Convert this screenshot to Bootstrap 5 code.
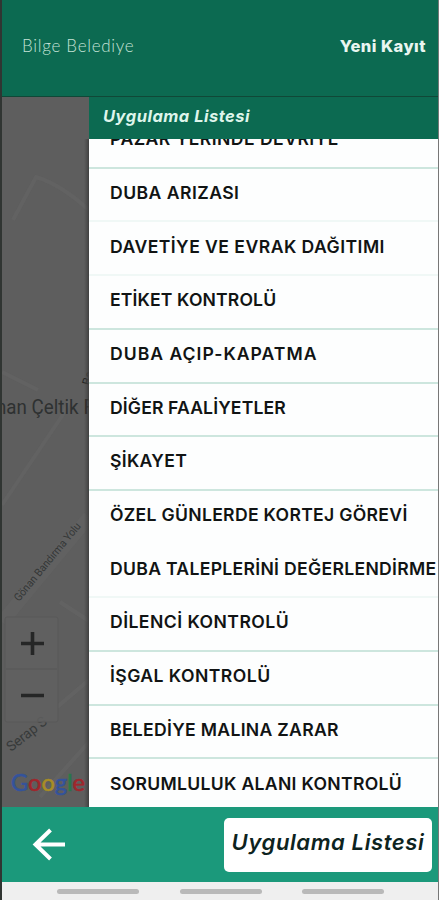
<!DOCTYPE html>
<html lang="tr">
<head>
<meta charset="utf-8">
<meta name="viewport" content="width=device-width, initial-scale=1">
<title>Bilge Belediye</title>
<link href="https://cdn.jsdelivr.net/npm/bootstrap@5.3.0/dist/css/bootstrap.min.css" rel="stylesheet">
<style>
body{font-family:Inter,"Open Sans",sans-serif;background:#5e5e5e}
.screen{height:900px;border-left:2px solid #303532;border-right:1px solid #777}
.topbar{height:97px;background:#0c6a51;border-bottom:1px solid #104837;color:#e9f6f0;padding:0 12px 4px 20px}
.brand-name{font-family:Lato,sans-serif;font-weight:300;font-size:17px;letter-spacing:.7px;color:#c4e2d6}
.new-record{font-weight:800;font-size:16.5px;letter-spacing:.45px}
.map-pane{width:87px;background:#5e5e5e}
.drawer{background:#fdfefe}
.drawer-title{height:42px;background:#0c6a51;color:#def5eb;font-weight:700;font-size:16.5px;letter-spacing:.5px;padding:0 14px 3px}
.task-clip{min-height:0}
.task-list{margin-top:-23.9px}
.task-list .list-group-item{flex:none;height:53.7px;padding:0 0 4px 21px;border:0;border-bottom:2px solid #cde6de;background:transparent;color:#111414;font-weight:600;font-size:17.6px;line-height:1;white-space:nowrap;letter-spacing:.3px}
.task-list .list-group-item.faint{border-color:#f0f8f6}
.task-list .list-group-item.plain{border-color:transparent}
.task-list .list-group-item.track-none{letter-spacing:.13px}
.task-list .list-group-item.track-mid{letter-spacing:.45px}
.task-list .list-group-item.track-wide{letter-spacing:1px}
.bottombar{height:75px;background:#1b997b;padding:0 6px 0 30px}
.list-btn{width:208px;height:54px;background:#fff;color:#0d2320;border:0;border-radius:5px;padding:0 0 5px;font-weight:600;font-size:22px;letter-spacing:.6px;white-space:nowrap}
.sysbar{height:18px;background:#efefef;padding:0 54px 0 55px}
.sysbar span{width:82px;height:5px;background:#b9b9b9}
</style>
<script src="https://cdn.jsdelivr.net/npm/bootstrap@5.3.0/dist/js/bootstrap.bundle.min.js"></script>
</head>
<body class="overflow-hidden">
<div class="screen d-flex flex-column overflow-hidden">
  <header class="topbar d-flex align-items-center justify-content-between flex-shrink-0">
    <span class="brand-name">Bilge Belediye</span>
    <span class="new-record">Yeni Kayıt</span>
  </header>
  <main class="d-flex flex-grow-1 overflow-hidden">
    <div class="map-pane flex-shrink-0">
      <svg class="d-block" width="87" height="710" viewBox="2 97 87 710">
        <defs><linearGradient id="edge"><stop offset="0" stop-color="#444" stop-opacity="0"/><stop offset="1" stop-color="#404040"/></linearGradient></defs>
        <g fill="none" stroke="#666" stroke-width="4">
          <path d="M13 220 36 177Q60 184 89 210M2 372l36 18M2 505 62 416 70 400" opacity=".5"/>
          <path d="M2 622 89 517" stroke-width="13" opacity=".4"/>
          <path d="M60 602 89 621M56 708 89 680M40 797 89 742" opacity=".6"/>
        </g>
        <g font-family="Roboto,sans-serif">
          <text x="-4" y="414" font-size="20" fill="#2e3131" textLength="82.500" lengthAdjust="spacingAndGlyphs">nan Çeltik</text>
          <text x="83.500" y="414" font-size="20" fill="#1d2020">F</text>
          <text transform="translate(90 386) rotate(-75)" font-size="12" fill="#242626">Ba</text>
          <text transform="translate(19 602) rotate(-50.5)" font-size="11" fill="#343737" textLength="98" lengthAdjust="spacingAndGlyphs">Gönan Bandırma Yolu</text>
          <text transform="translate(11 752) rotate(-38)" font-size="14" fill="#373a3a" textLength="47" lengthAdjust="spacingAndGlyphs">Serap S</text>
        </g>
        <rect x="5" y="617" width="53" height="105" rx="2" fill="#606060" fill-opacity=".85" stroke="#595959"/>
        <path d="M6 669h51" stroke="#575757"/>
        <path d="M21 643.500h23M32.500 632v23M21 695.500h23" stroke="#252626" stroke-width="3.600"/>
        <g font-family="Lato,sans-serif" font-size="23" font-weight="400" stroke-width=".6">
          <text x="11" y="791" textLength="74" lengthAdjust="spacingAndGlyphs"><tspan fill="#34539b" stroke="#34539b">G</tspan><tspan fill="#a0262c" stroke="#a0262c">o</tspan><tspan fill="#a88d25" stroke="#a88d25">o</tspan><tspan fill="#34539b" stroke="#34539b">g</tspan><tspan fill="#287a49" stroke="#287a49">l</tspan><tspan fill="#a0262c" stroke="#a0262c">e</tspan></text>
        </g>
        <rect x="84" y="139" width="5" height="668" fill="url(#edge)"/>
      </svg>
    </div>
    <section class="drawer d-flex flex-column flex-grow-1 overflow-hidden">
      <h1 class="drawer-title d-flex align-items-center fst-italic mb-0 flex-shrink-0">Uygulama Listesi</h1>
      <div class="task-clip flex-grow-1 overflow-hidden">
        <ul class="task-list list-group list-group-flush">
          <li class="list-group-item d-flex align-items-center track-mid">PAZAR YERİNDE DEVRİYE</li>
          <li class="list-group-item d-flex align-items-center faint track-mid">DUBA ARIZASI</li>
          <li class="list-group-item d-flex align-items-center faint track-mid">DAVETİYE VE EVRAK DAĞITIMI</li>
          <li class="list-group-item d-flex align-items-center track-none">ETİKET KONTROLÜ</li>
          <li class="list-group-item d-flex align-items-center track-wide">DUBA AÇIP-KAPATMA</li>
          <li class="list-group-item d-flex align-items-center track-none">DİĞER FAALİYETLER</li>
          <li class="list-group-item d-flex align-items-center">ŞİKAYET</li>
          <li class="list-group-item d-flex align-items-center plain">ÖZEL GÜNLERDE KORTEJ GÖREVİ</li>
          <li class="list-group-item d-flex align-items-center faint">DUBA TALEPLERİNİ DEĞERLENDİRME</li>
          <li class="list-group-item d-flex align-items-center track-mid">DİLENCİ KONTROLÜ</li>
          <li class="list-group-item d-flex align-items-center track-mid">İŞGAL KONTROLÜ</li>
          <li class="list-group-item d-flex align-items-center">BELEDİYE MALINA ZARAR</li>
          <li class="list-group-item d-flex align-items-center plain">SORUMLULUK ALANI KONTROLÜ</li>
        </ul>
      </div>
    </section>
  </main>
  <footer class="flex-shrink-0">
    <div class="bottombar d-flex align-items-center justify-content-between">
      <svg width="34" height="34" viewBox="0 0 34 34" fill="none" stroke="#fff" stroke-width="4"><path d="M18.500 2 3.500 16.500 18.500 31M3.500 16.500H33"/></svg>
      <button type="button" class="list-btn btn fst-italic">Uygulama Listesi</button>
    </div>
    <div class="sysbar d-flex align-items-center justify-content-between"><span class="rounded-pill"></span><span class="rounded-pill"></span><span class="rounded-pill"></span></div>
  </footer>
</div>
</body>
</html>
